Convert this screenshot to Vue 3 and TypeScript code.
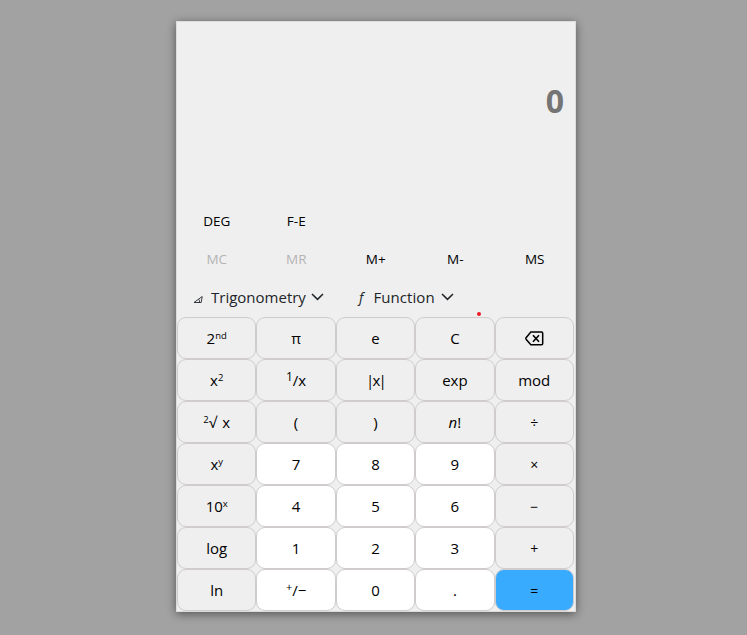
<script setup lang="ts">
interface Key {
  label: string
  kind?: 'num' | 'equals'
  pre?: string
  sup?: string
  italic?: string
  icon?: boolean
  cls?: string
}

const memory = [
  { label: 'MC', off: true },
  { label: 'MR', off: true },
  { label: 'M+', off: false },
  { label: 'M-', off: false },
  { label: 'MS', off: false },
]

const keys: Key[] = [
  { label: '2', sup: 'nd' }, { label: 'π' }, { label: 'e' }, { label: 'C' }, { label: '', icon: true },
  { label: 'x', sup: '2' }, { label: '/x', pre: '1', cls: 'large-sup' }, { label: '|x|', cls: 'abs' }, { label: 'exp' }, { label: 'mod' },
  { label: '√ x', pre: '2', cls: 'root' }, { label: '(' }, { label: ')' }, { label: '!', italic: 'n' }, { label: '÷', cls: 'op' },
  { label: 'x', sup: 'y' }, { label: '7', kind: 'num' }, { label: '8', kind: 'num' }, { label: '9', kind: 'num' }, { label: '×', cls: 'op' },
  { label: '10', sup: 'x' }, { label: '4', kind: 'num' }, { label: '5', kind: 'num' }, { label: '6', kind: 'num' }, { label: '−', cls: 'op' },
  { label: 'log' }, { label: '1', kind: 'num' }, { label: '2', kind: 'num' }, { label: '3', kind: 'num' }, { label: '+', cls: 'op' },
  { label: 'ln' }, { label: '/−', pre: '+', kind: 'num', cls: 'sign' }, { label: '0', kind: 'num' }, { label: '.', kind: 'num' }, { label: '=', kind: 'equals', cls: 'op' },
]
</script>

<template>
  <main class="page">
    <section class="calculator">
      <div class="display">0</div>
      <div class="row modes"><span>DEG</span><span>F-E</span></div>
      <div class="row memory">
        <span v-for="m in memory" :key="m.label" :class="{ off: m.off }">{{ m.label }}</span>
      </div>
      <div class="menus">
        <div class="menu trig">
          <svg class="angle" width="11" height="9" viewBox="0 0 11 9"><path d="M1 7.5H8.2L9.2 1.5Z M5.6 4.2Q6.8 5.5 6.5 7.5" /></svg>
          <span class="word">Trigonometry</span>
          <svg class="chevron" width="13" height="8" viewBox="0 0 13 8"><path d="M1 1L6.5 6.4L12 1" /></svg>
        </div>
        <div class="menu func">
          <span class="fn">ƒ</span>
          <span class="word wide">Function</span>
          <svg class="chevron" width="13" height="8" viewBox="0 0 13 8"><path d="M1 1L6.5 6.4L12 1" /></svg>
        </div>
        <i class="dot"></i>
      </div>
      <div class="keys">
        <button v-for="(k, i) in keys" :key="i" type="button" :class="['key', k.kind, k.cls]">
          <svg v-if="k.icon" class="erase" width="19" height="15" viewBox="0 0 19 15">
            <path d="M5.8 1.1H16.6Q17.7 1.1 17.7 2.2V12.6Q17.7 13.7 16.6 13.7H5.8L1.1 8.2Q.6 7.4 1.1 6.7Z" />
            <path class="cross" d="M8 4.2L14 10.7M14 4.2L8 10.7" />
          </svg>
          <span v-else class="text"><sup v-if="k.pre">{{ k.pre }}</sup><em v-if="k.italic">{{ k.italic }}</em>{{ k.label }}<sup v-if="k.sup">{{ k.sup }}</sup></span>
        </button>
      </div>
    </section>
  </main>
</template>

<style>
body { background: #a2a2a2; }
</style>

<style scoped>
.page {
  box-sizing: border-box;
  height: 635px;
  padding: 21px 0 0 176px;
  overflow: hidden;
  font-family: "Segoe UI", "Open Sans", "Noto Sans", sans-serif;
  color: #000;
}
.calculator {
  box-sizing: border-box;
  width: 400px;
  height: 591px;
  border: 1px solid #dcdcdc;
  background: #efefef;
  box-shadow: 0 2px 9px rgba(0, 0, 0, 0.48);
}
.display {
  box-sizing: border-box;
  height: 180px;
  padding: 56px 11px 0 0;
  text-align: right;
  font-size: 32px;
  line-height: 46px;
  font-weight: 700;
  color: #757575;
}
.row {
  display: grid;
  grid-template-columns: repeat(5, 79.5px);
  height: 38px;
  line-height: 38px;
  text-align: center;
  font-size: 13.5px;
}
.off { color: #b4b4b4; }
.menus {
  position: relative;
  box-sizing: border-box;
  display: flex;
  height: 39px;
  padding-bottom: 2px;
  align-items: center;
  font-size: 15px;
  color: #212529;
}
.menu { display: flex; align-items: center; }
.trig { padding-left: 16px; }
.func { padding-left: 33px; }
.angle { margin: 5px 7px 0 0; fill: none; stroke: #212529; stroke-width: 0.9; }
.chevron { margin-left: 6px; fill: none; stroke: #212529; stroke-width: 1.5; }
.trig .chevron { margin-left: 5.5px; }
.wide { letter-spacing: 0.08px; }
.fn { width: 16px; font-style: italic; font-size: 14px; }
.dot {
  position: absolute;
  left: 299.5px;
  top: 33.5px;
  width: 4px;
  height: 4px;
  border-radius: 50%;
  background: #ed1c24;
}
.keys { display: grid; grid-template-columns: repeat(5, 79.4px); grid-auto-rows: 42px; }
.key {
  box-sizing: border-box;
  display: flex;
  align-items: center;
  justify-content: center;
  padding: 0;
  border: 1px solid #d0cccd;
  border-radius: 9px;
  background: #efefef;
  color: #000;
  font: 15px/22px "Segoe UI", "Open Sans", "Noto Sans", sans-serif;
}
.num { background: #fff; }
.equals { background: #38abff; }
.text { white-space: pre; }
sup { font-size: 9.5px; line-height: 0; vertical-align: 5px; }
.large-sup sup { font-size: 12px; }
.sign sup { font-size: 11px; }
.abs { letter-spacing: -1.8px; }
.root { word-spacing: 1.5px; }
.op { padding-top: 2px; font-size: 14px; }
.equals { padding-top: 1px; }
.erase { margin-left: 1px; fill: none; stroke: #000; stroke-width: 1.5; }
.cross { stroke-width: 1.6; }
</style>
